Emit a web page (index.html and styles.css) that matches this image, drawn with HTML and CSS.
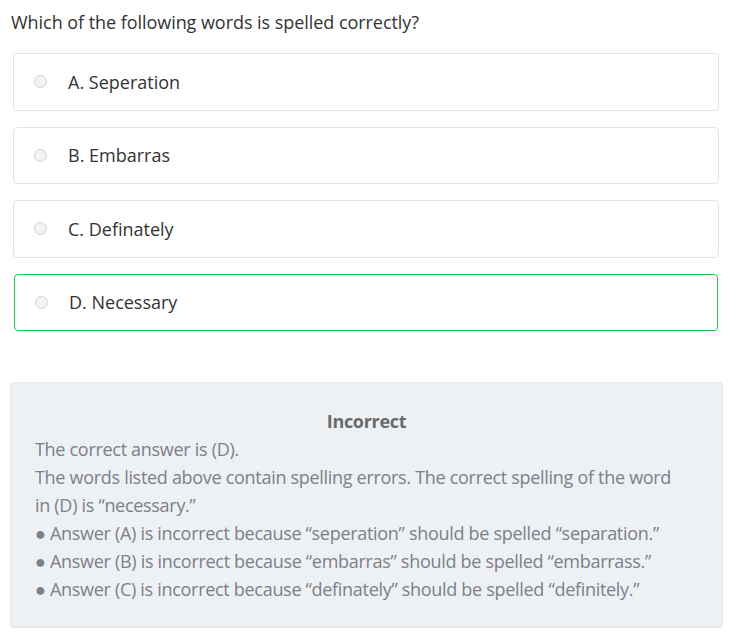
FILE: index.html
```html
<!DOCTYPE html>
<html>
<head>
<meta charset="utf-8">
<link rel="stylesheet" href="styles.css">
</head>
<body>
<div class="page">
  <div class="question">Which of the following words is spelled correctly?</div>
  <div class="options">
    <div class="option"><span class="radio"></span><span class="label">A. Seperation</span></div>
    <div class="option"><span class="radio"></span><span class="label">B. Embarras</span></div>
    <div class="option"><span class="radio"></span><span class="label">C. Definately</span></div>
    <div class="option selected"><span class="radio"></span><span class="label">D. Necessary</span></div>
  </div>
  <div class="explanation">
    <div class="verdict">Incorrect</div>
    <div class="line">The correct answer is (D).</div>
    <div class="line">The words listed above contain spelling errors. The correct spelling of the word in (D) is “necessary.”</div>
    <div class="line">● Answer (A) is incorrect because “seperation” should be spelled “separation.”</div>
    <div class="line">● Answer (B) is incorrect because “embarras” should be spelled “embarrass.”</div>
    <div class="line">● Answer (C) is incorrect because “definately” should be spelled “definitely.”</div>
  </div>
</div>
</body>
</html>
```

FILE: styles.css
```css
html, body {
  margin: 0;
  padding: 0;
  background: #ffffff;
}
body {
  font-family: "Open Sans", "Noto Sans", sans-serif;
  color: #333333;
}
.page {
  padding-top: 8px;
}
.question {
  margin-left: 11px;
  font-size: 18px;
  line-height: 28px;
  letter-spacing: -0.05px;
}
.options {
  margin-top: 17px;
  display: flex;
  flex-direction: column;
  gap: 16px;
  margin-left: 13px;
  width: 706px;
}
.option {
  box-sizing: border-box;
  height: 57.5px;
  border: 1px solid #e1e4e8;
  border-radius: 4px;
  display: flex;
  align-items: center;
  padding-left: 20px;
}
.option.selected {
  border-color: #1fc94d;
  margin: 0 1px;
}
.radio {
  box-sizing: border-box;
  width: 13px;
  height: 13px;
  border-radius: 50%;
  border: 1px solid #d2d2d2;
  background: #f3f3f3;
  flex: none;
}
.label {
  margin-left: 21px;
  font-size: 18px;
}
.explanation {
  box-sizing: border-box;
  margin: 51px 0 0 10px;
  width: 713px;
  background: #eef1f4;
  border: 1px solid #e2e6ea;
  border-radius: 4px;
  padding: 24px 34px 24px 24px;
  color: #7b8089;
  font-size: 18px;
  line-height: 28px;
  letter-spacing: -0.3px;
}
.verdict {
  text-align: center;
  font-weight: 700;
  color: #6a6a6a;
  padding-left: 10px;
}
```
